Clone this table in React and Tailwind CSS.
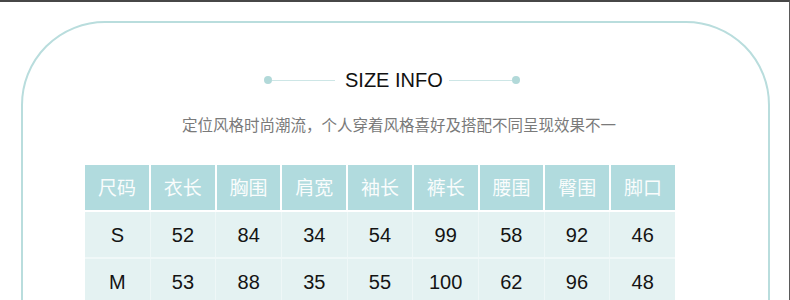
import React from "react";

const headers = ["尺码", "衣长", "胸围", "肩宽", "袖长", "裤长", "腰围", "臀围", "脚口"];
const rows = [
  ["S", "52", "84", "34", "54", "99", "58", "92", "46"],
  ["M", "53", "88", "35", "55", "100", "62", "96", "48"],
];

export default function App() {
  return (
    <div className="w-[790px] h-[300px] overflow-hidden bg-white border-t-2 border-t-[#474747] border-r border-r-[#5a5a5a]">
      <div className="pt-[19px] pl-[21px]">
        <div className="w-[749px] h-[420px] border-2 border-[#b9dddd] rounded-[84px] flex flex-col items-start">
          {/* Title */}
          <div className="mt-[45px] ml-[241px] flex items-center h-[24px]">
            <span className="w-[8px] h-[8px] rounded-full bg-[#b2d9d9]" />
            <span className="w-[63px] h-[1px] bg-[#cde6e6]" />
            <span
              className="pl-[10px] pr-[6px] text-[20px] leading-[24px] text-[#111]"
              style={{ fontFamily: '"Liberation Sans", Arial, sans-serif' }}
            >
              SIZE INFO
            </span>
            <span className="w-[63px] h-[1px] bg-[#cde6e6]" />
            <span className="w-[8px] h-[8px] rounded-full bg-[#b2d9d9]" />
          </div>
          {/* Subtitle */}
          <div
            className="mt-[20px] ml-[159px] text-[15.5px] leading-[24px] text-[#7a7a7a] whitespace-nowrap"
            style={{ fontFamily: '"Noto Sans CJK SC", sans-serif' }}
          >
            定位风格时尚潮流，个人穿着风格喜好及搭配不同呈现效果不一
          </div>
          {/* Table */}
          <div className="mt-[29px] ml-[62px] w-[590px]">
            <div className="grid grid-cols-9 gap-x-[2px] bg-white">
              {headers.map((h) => (
                <div
                  key={h}
                  className="h-[45px] bg-[#b1dbde] flex items-center justify-center text-[19px] text-white/95"
                  style={{ fontFamily: '"Noto Sans CJK SC", serif' }}
                >
                  {h}
                </div>
              ))}
            </div>
            <div className="h-[2px] bg-white" />
            {rows.map((r, i) => (
              <div key={i}>
                {i > 0 && <div className="h-[2px] bg-[#f0f8f8]" />}
                <div className="grid grid-cols-9 gap-x-[1px] bg-[#eef7f7]">
                  {r.map((c, j) => (
                    <div
                      key={j}
                      className="h-[45px] bg-[#e4f2f2] flex items-center justify-center text-[20px] text-[#141414]"
                      style={{ fontFamily: '"Liberation Sans", Arial, sans-serif' }}
                    >
                      {c}
                    </div>
                  ))}
                </div>
              </div>
            ))}
          </div>
        </div>
      </div>
    </div>
  );
}
